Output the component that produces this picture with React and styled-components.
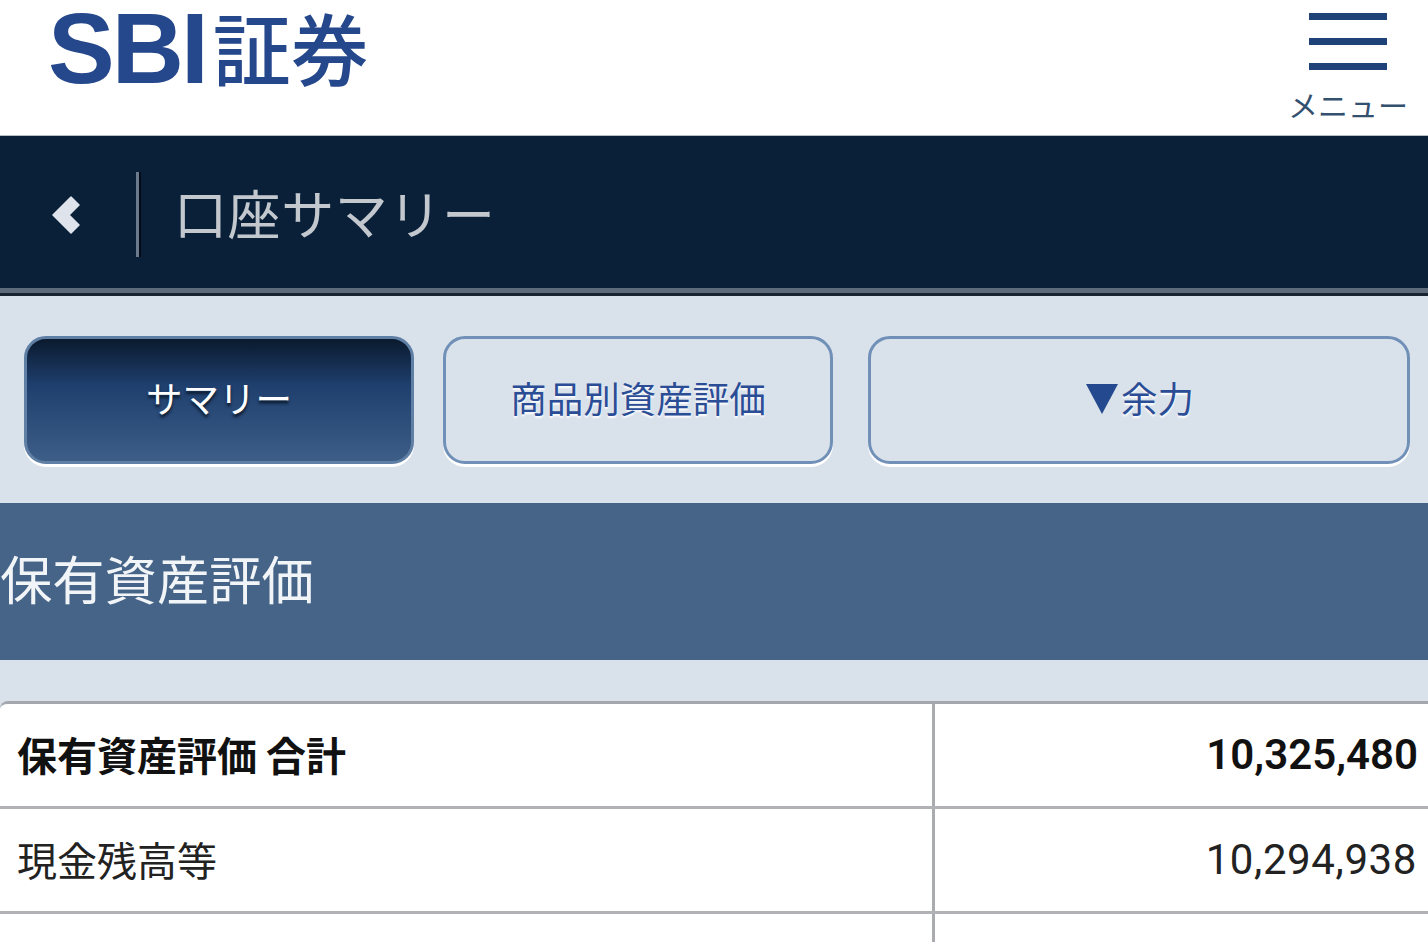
import React from "react";
import styled, { createGlobalStyle } from "styled-components";

const CJK = `"Noto Sans CJK JP", "Noto Sans", sans-serif`;

const Global = createGlobalStyle`
  html, body { margin: 0; padding: 0; background: #fff; overflow: hidden; }
  body { font-family: Roboto, ${CJK}; }
  * { box-sizing: border-box; }
`;

const Page = styled.div`
  width: 1428px;
  height: 942px;
  overflow: hidden;
  background: #d9e1ea;
`;

const Header = styled.header`
  height: 135px;
  background: #fff;
  display: flex;
  justify-content: space-between;
  padding: 0 21px 0 48px;
`;

const Logo = styled.div`
  display: flex;
  align-items: center;
  height: 96px;
  color: #25478c;
  white-space: nowrap;
`;

const LogoLatin = styled.span`
  font: 700 100px/96px "Liberation Sans", sans-serif;
  letter-spacing: -3px;
`;

const LogoKanji = styled.span`
  font: 500 78px/96px ${CJK};
  margin-left: 7px;
  position: relative;
  top: -2px;
`;

const MenuButton = styled.div`
  display: flex;
  flex-direction: column;
  align-items: center;
  width: 118px;
  padding-top: 13px;
`;

const MenuBar = styled.span`
  display: block;
  width: 78px;
  height: 7px;
  margin-bottom: 18px;
  background: #1f4379;
  &:nth-child(3) { margin-bottom: 19px; }
`;

const MenuLabel = styled.span`
  font: 400 30px/1 ${CJK};
  color: #34506f;
  white-space: nowrap;
`;

const NavBar = styled.nav`
  height: 161px;
  background: #0a2038;
  border-top: 1px solid #b8bec6;
  border-bottom: 3px solid #1a2430;
  box-shadow: inset 0 -5px 0 #5d6a79;
  display: flex;
  align-items: center;
  padding-left: 51px;
`;

const BackIcon = styled.svg`
  width: 29px;
  height: 38px;
  flex: none;
`;

const NavDivider = styled.span`
  width: 5px;
  height: 85px;
  margin-left: 56px;
  background: linear-gradient(90deg, #6b7a8c 0 50%, #020b16 50% 100%);
  flex: none;
`;

const NavTitle = styled.h1`
  margin: -5px 0 0 33px;
  font: 400 53px/1 ${CJK};
  letter-spacing: 0.6px;
  color: #c3c8cf;
  white-space: nowrap;
`;

const Tabs = styled.div`
  height: 207px;
  display: grid;
  grid-template-columns: 390px 390px 548px;
  column-gap: 29px;
  padding: 40px 0 39px 24px;
  & > :nth-child(3) { margin-left: 6px; }
`;

const Tab = styled.div`
  height: 128px;
  border-radius: 22px;
  display: flex;
  align-items: center;
  justify-content: center;
  padding-bottom: 3px;
  font: 400 36.5px/1 ${CJK};
  white-space: nowrap;
  border: 3px solid ${(p) => (p.$active ? "#5f7fa5" : "#7190b8")};
  box-shadow: 0 3px 0 #fff;
  color: ${(p) => (p.$active ? "#fff" : "#2b4d96")};
  background: ${(p) =>
    p.$active
      ? "linear-gradient(180deg, #0a1a2e 0%, #1f3f6e 38%, #3d5e87 100%)"
      : "#d9e1ea"};
  text-shadow: ${(p) => (p.$active ? "0 3px 3px #0b1a2c" : "0 2px 2px #fff")};
`;

const Triangle = styled.span`
  width: 0;
  height: 0;
  margin: 0 3px 0 2px;
  border-left: 16px solid transparent;
  border-right: 16px solid transparent;
  border-top: 30px solid #24498f;
`;

const SectionHeading = styled.h2`
  margin: 0;
  height: 157px;
  background: #466487;
  display: flex;
  align-items: center;
  padding-bottom: 8px;
  font: 400 52.3px/1 ${CJK};
  color: #f2f5f8;
`;

const Table = styled.div`
  margin-top: 41px;
  background: #fff;
  border-top: 3px solid #a4a8ae;
  border-top-left-radius: 8px;
  height: 300px;
`;

const Row = styled.div`
  display: grid;
  grid-template-columns: 932px 1fr;
  height: ${(p) => p.$height || 105}px;
  border-bottom: ${(p) => (p.$last ? "none" : "3px solid #b0b2b5")};
`;

const LabelCell = styled.div`
  display: flex;
  align-items: center;
  padding-left: 17px;
  padding-bottom: 2px;
  font: ${(p) => (p.$bold ? 700 : 400)} 40px/1 ${CJK};
  color: ${(p) => (p.$bold ? "#111" : "#222")};
  white-space: nowrap;
`;

const ValueCell = styled.div`
  display: flex;
  align-items: center;
  justify-content: flex-end;
  padding-right: ${(p) => (p.$bold ? 10 : 11)}px;
  border-left: 3px solid #a9abae;
  font: ${(p) => (p.$bold ? 600 : 400)} 42px/1 Roboto, sans-serif;
  letter-spacing: ${(p) => (p.$bold ? 0 : 0.6)}px;
  color: ${(p) => (p.$bold ? "#111" : "#222")};
`;

export default function App() {
  return (
    <>
      <Global />
      <Page>
        <Header>
          <Logo>
            <LogoLatin>SBI</LogoLatin>
            <LogoKanji>証券</LogoKanji>
          </Logo>
          <MenuButton>
            <MenuBar />
            <MenuBar />
            <MenuBar />
            <MenuLabel>メニュー</MenuLabel>
          </MenuButton>
        </Header>
        <NavBar>
          <BackIcon viewBox="0 0 29 38">
            <path d="M2 19 L20 1 L28 9 L18 19 L28 29 L20 37 Z" fill="#dfe4ec" stroke="#dfe4ec" strokeWidth="1.5" strokeLinejoin="round" />
          </BackIcon>
          <NavDivider />
          <NavTitle>口座サマリー</NavTitle>
        </NavBar>
        <Tabs>
          <Tab $active>サマリー</Tab>
          <Tab>商品別資産評価</Tab>
          <Tab>
            <Triangle />
            余力
          </Tab>
        </Tabs>
        <SectionHeading>保有資産評価</SectionHeading>
        <Table>
          <Row>
            <LabelCell $bold>保有資産評価 合計</LabelCell>
            <ValueCell $bold>10,325,480</ValueCell>
          </Row>
          <Row>
            <LabelCell>現金残高等</LabelCell>
            <ValueCell>10,294,938</ValueCell>
          </Row>
          <Row $last $height={40}>
            <LabelCell />
            <ValueCell />
          </Row>
        </Table>
      </Page>
    </>
  );
}
